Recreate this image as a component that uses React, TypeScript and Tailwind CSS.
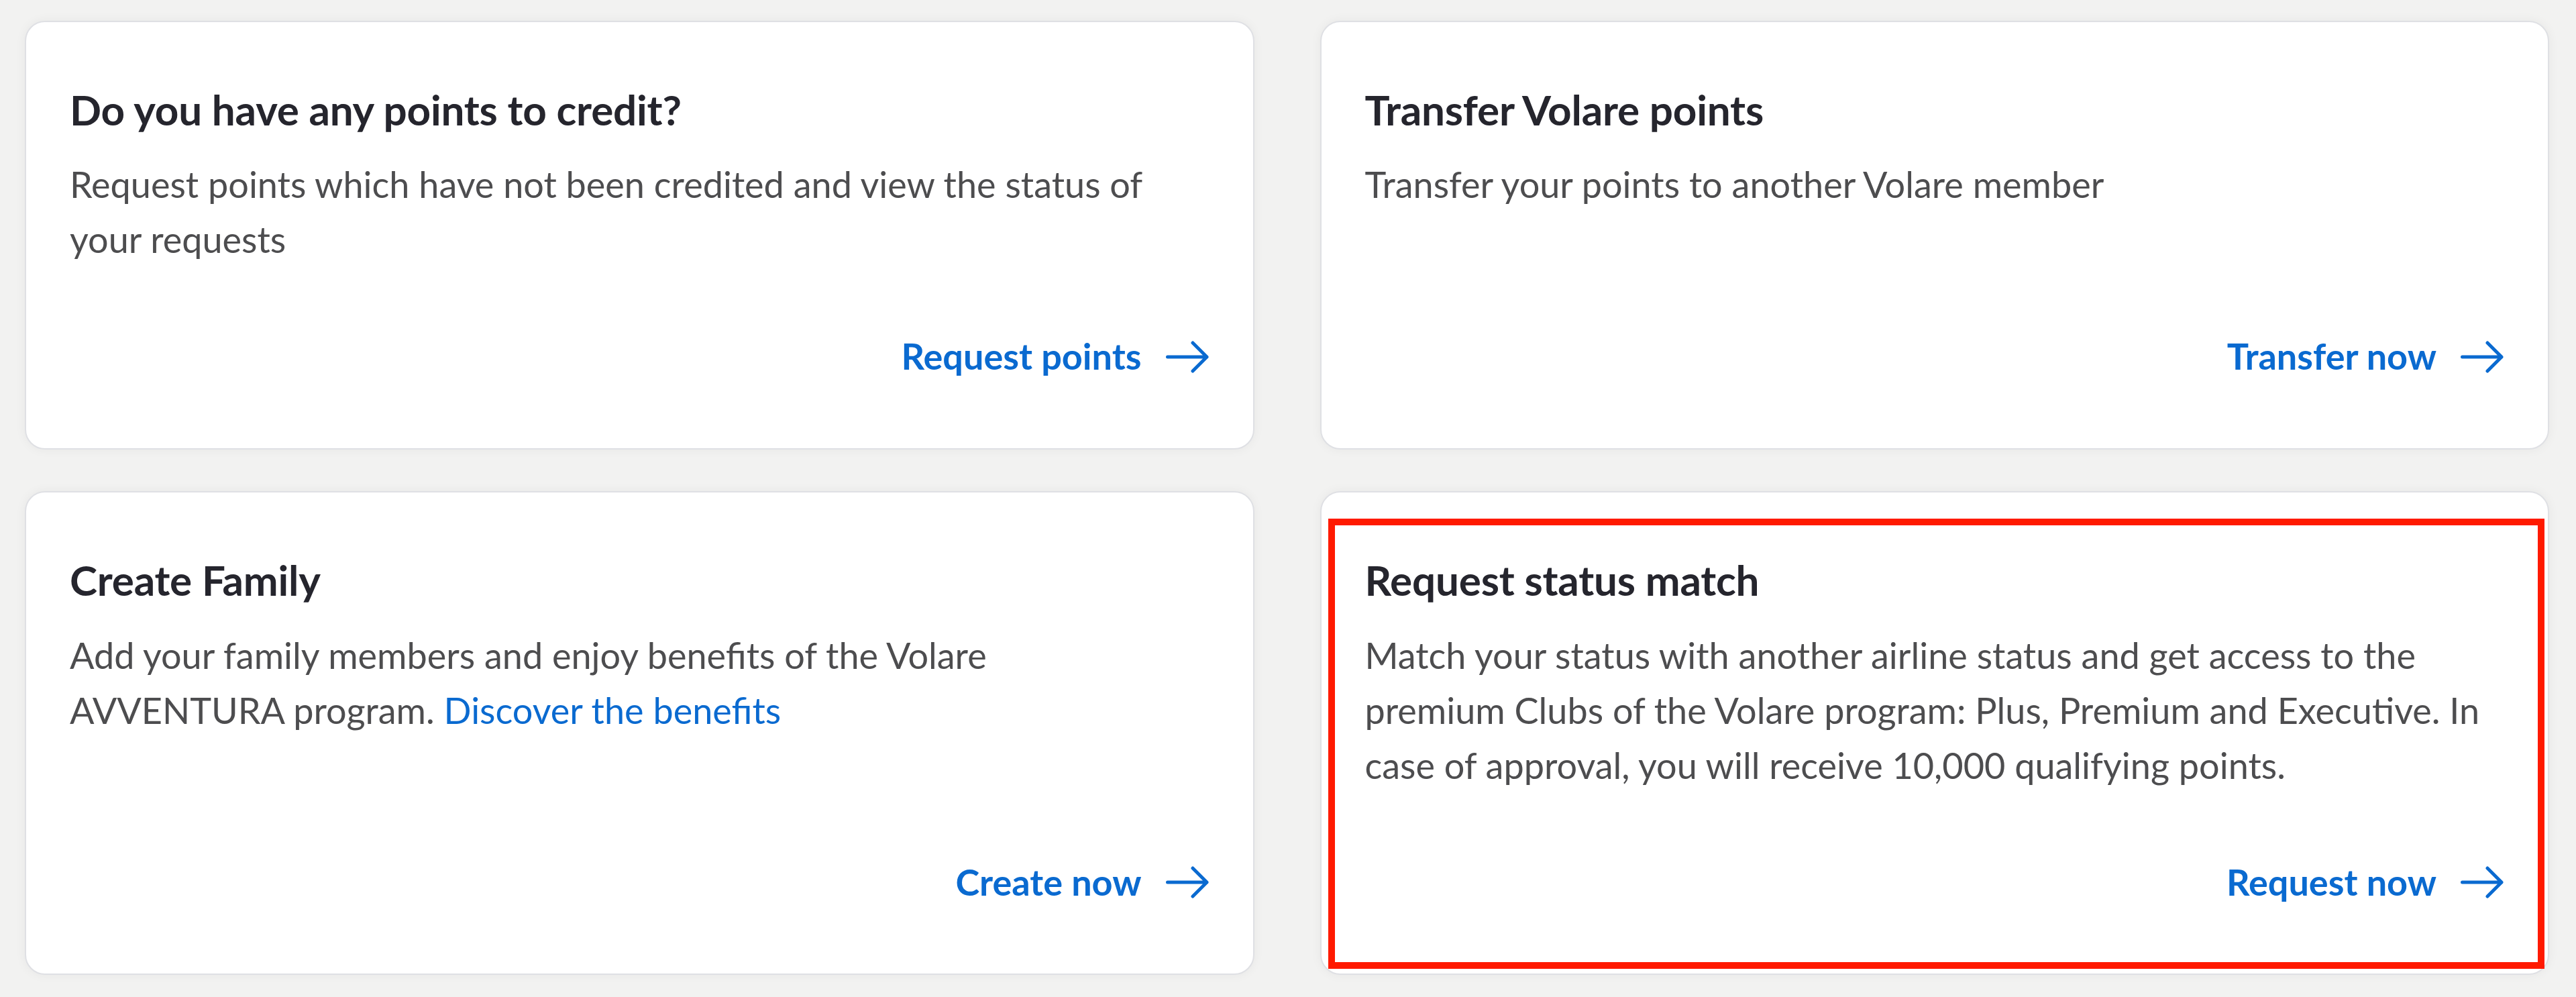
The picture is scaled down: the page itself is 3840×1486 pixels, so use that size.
import React from "react";

type CardProps = {
  title: string;
  children: React.ReactNode;
  action: string;
  marked?: boolean;
};

function ArrowIcon() {
  return (
    <svg
      viewBox="0 0 64 48"
      className="h-[48px] w-[64px] shrink-0"
      fill="none"
      stroke="currentColor"
      strokeWidth="5"
      strokeLinecap="round"
      strokeLinejoin="round"
      aria-hidden="true"
    >
      <path d="M2.5 24H61M40 3l21 21-21 21" />
    </svg>
  );
}

function Card({ title, children, action, marked }: CardProps) {
  return (
    <div className="relative flex flex-col rounded-[30px] border-2 border-[#dfe0e4] bg-white pl-[65px] pr-[66px] pt-[93px] pb-[104px] shadow-[0_0_16px_rgba(0,0,0,0.05)]">
      <h2 className="text-[62px] font-bold leading-[1.2] tracking-[-0.2px] text-[#25252d]">
        {title}
      </h2>
      <p className="mt-[34px] mr-[18px] text-[54px] leading-[82px] text-[#4d4d4f]">
        {children}
      </p>
      <a
        href="#"
        className="mt-auto flex items-center justify-end gap-[36px] pt-[101px] text-[#0a6ad0]"
      >
        <span className="text-[54px] font-bold leading-[1.2]">{action}</span>
        <ArrowIcon />
      </a>
      {marked && (
        <div className="pointer-events-none absolute left-[10px] right-[5px] top-[39px] bottom-[7px] border-[10px] border-[#ff1a00]" />
      )}
    </div>
  );
}

export default function App() {
  return (
    <div
      className="min-h-screen bg-[#f2f2f1] pl-[37px] pr-[40px] pt-[31px] pb-[34px]"
      style={{ fontFamily: "Lato, 'Noto Sans', sans-serif" }}
    >
      <div className="grid grid-cols-2 gap-x-[98px] gap-y-[62px]">
        <Card title="Do you have any points to credit?" action="Request points">
          Request points which have not been credited and view the status of
          your requests
        </Card>
        <Card title="Transfer Volare points" action="Transfer now">
          Transfer your points to another Volare member
        </Card>
        <Card title="Create Family" action="Create now">
          Add your family members and enjoy benefits of the Volare AVVENTURA
          program. <span className="text-[#0a6ad0]">Discover the benefits</span>
        </Card>
        <Card title="Request status match" action="Request now" marked>
          Match your status with another airline status and get access to the
          premium Clubs of the Volare program: Plus, Premium and Executive. In
          case of approval, you will receive 10,000 qualifying points.
        </Card>
      </div>
    </div>
  );
}
